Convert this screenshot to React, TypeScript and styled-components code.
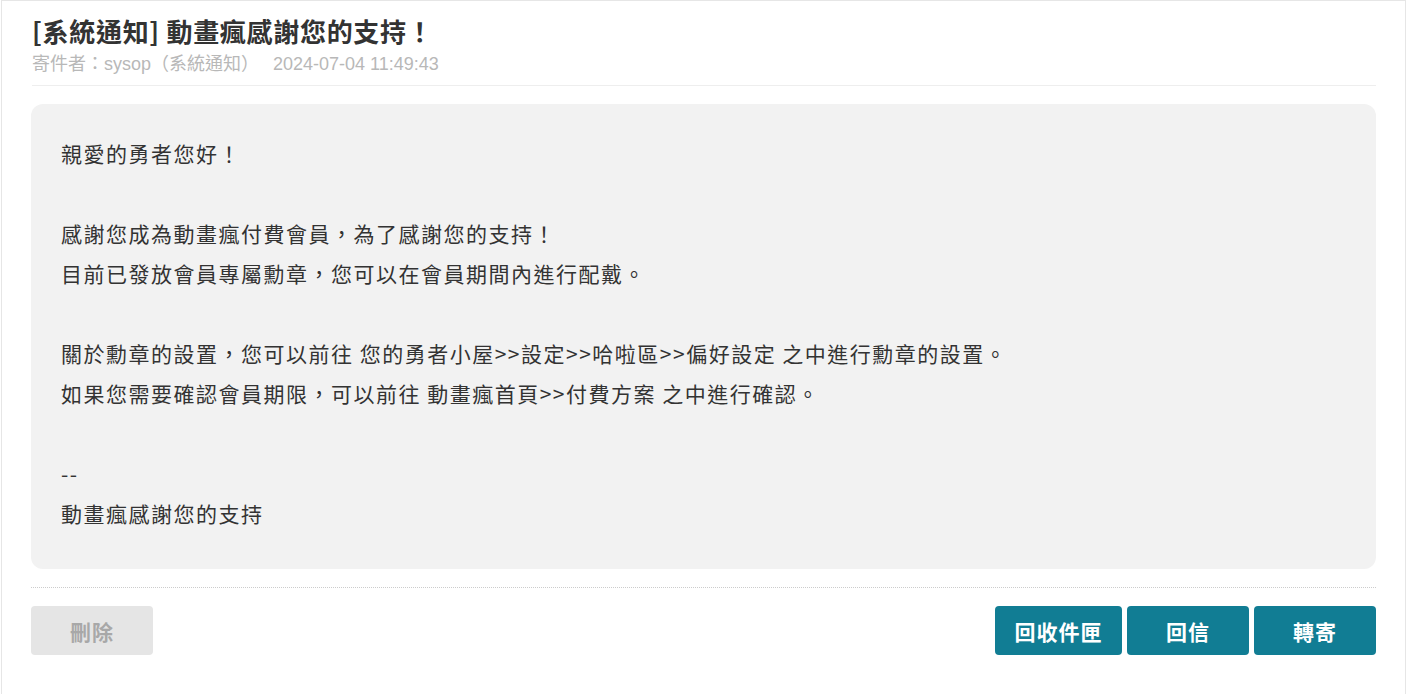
import * as React from 'react';
import styled, { createGlobalStyle } from 'styled-components';

const GlobalStyle = createGlobalStyle`
  html, body {
    margin: 0;
    padding: 0;
    background: #ffffff;
  }
  body {
    font-family: "Noto Sans CJK TC", "Liberation Sans", Arial, sans-serif;
    color: #333333;
  }
`;

const Page = styled.div`
  margin: 0 1px;
  min-height: 694px;
  box-sizing: border-box;
  border: 1px solid #e6e6e6;
  border-bottom: none;
  padding: 12px 29px 0 29px;
`;

const Header = styled.header`
  display: flex;
  flex-direction: column;
  padding-bottom: 9px;
  border-bottom: 1px solid #eeeeee;
  margin-left: 1px;
`;

const Title = styled.h1`
  margin: 0;
  font-size: 26px;
  line-height: 36px;
  font-weight: 700;
  letter-spacing: 0.7px;
  color: #333333;
`;

const Meta = styled.div`
  display: flex;
  gap: 14px;
  margin-top: 3px;
  font-family: "Liberation Sans", "Noto Sans CJK TC", Arial, sans-serif;
  font-size: 18px;
  line-height: 24px;
  color: #b8b8b8;
`;

const MessageBox = styled.div`
  margin-top: 18px;
  background: #f2f2f2;
  border-radius: 12px;
  padding: 29px 30px 36px 30px;
  font-size: 21px;
  line-height: 40px;
  color: #333333;
`;

const Line = styled.p<{ $blank?: boolean }>`
  margin: 0;
  min-height: 40px;
  letter-spacing: ${(p) => (p.$blank ? '0' : '1.5px')};
`;

const Footer = styled.div`
  margin-top: 18px;
  padding-top: 18px;
  border-top: 1px dotted #cccccc;
  display: flex;
  justify-content: space-between;
  align-items: center;
`;

const ButtonGroup = styled.div`
  display: flex;
  gap: 5px;
`;

const Button = styled.button<{ $variant?: 'teal' | 'muted'; $width: number }>`
  width: ${(p) => p.$width}px;
  height: 49px;
  border: none;
  border-radius: 4px;
  font-family: "Noto Sans CJK TC", "Liberation Sans", Arial, sans-serif;
  font-size: 21px;
  font-weight: 700;
  letter-spacing: 1px;
  cursor: pointer;
  background: ${(p) => (p.$variant === 'muted' ? '#e5e5e5' : '#117d94')};
  color: ${(p) => (p.$variant === 'muted' ? '#a8a8a8' : '#ffffff')};
`;

const lines = [
  '親愛的勇者您好！',
  '',
  '感謝您成為動畫瘋付費會員，為了感謝您的支持！',
  '目前已發放會員專屬勳章，您可以在會員期間內進行配戴。',
  '',
  '關於勳章的設置，您可以前往 您的勇者小屋>>設定>>哈啦區>>偏好設定 之中進行勳章的設置。',
  '如果您需要確認會員期限，可以前往 動畫瘋首頁>>付費方案 之中進行確認。',
  '',
  '--',
  '動畫瘋感謝您的支持',
];

export default function App() {
  return (
    <>
      <GlobalStyle />
      <Page>
        <Header>
          <Title>[系統通知] 動畫瘋感謝您的支持！</Title>
          <Meta>
            <span>寄件者：sysop（系統通知）</span>
            <span>2024-07-04 11:49:43</span>
          </Meta>
        </Header>
        <MessageBox>
          {lines.map((text, i) => (
            <Line key={i} $blank={text === ''}>
              {text}
            </Line>
          ))}
        </MessageBox>
        <Footer>
          <Button $variant="muted" $width={122}>刪除</Button>
          <ButtonGroup>
            <Button $width={127}>回收件匣</Button>
            <Button $width={122}>回信</Button>
            <Button $width={122}>轉寄</Button>
          </ButtonGroup>
        </Footer>
      </Page>
    </>
  );
}
